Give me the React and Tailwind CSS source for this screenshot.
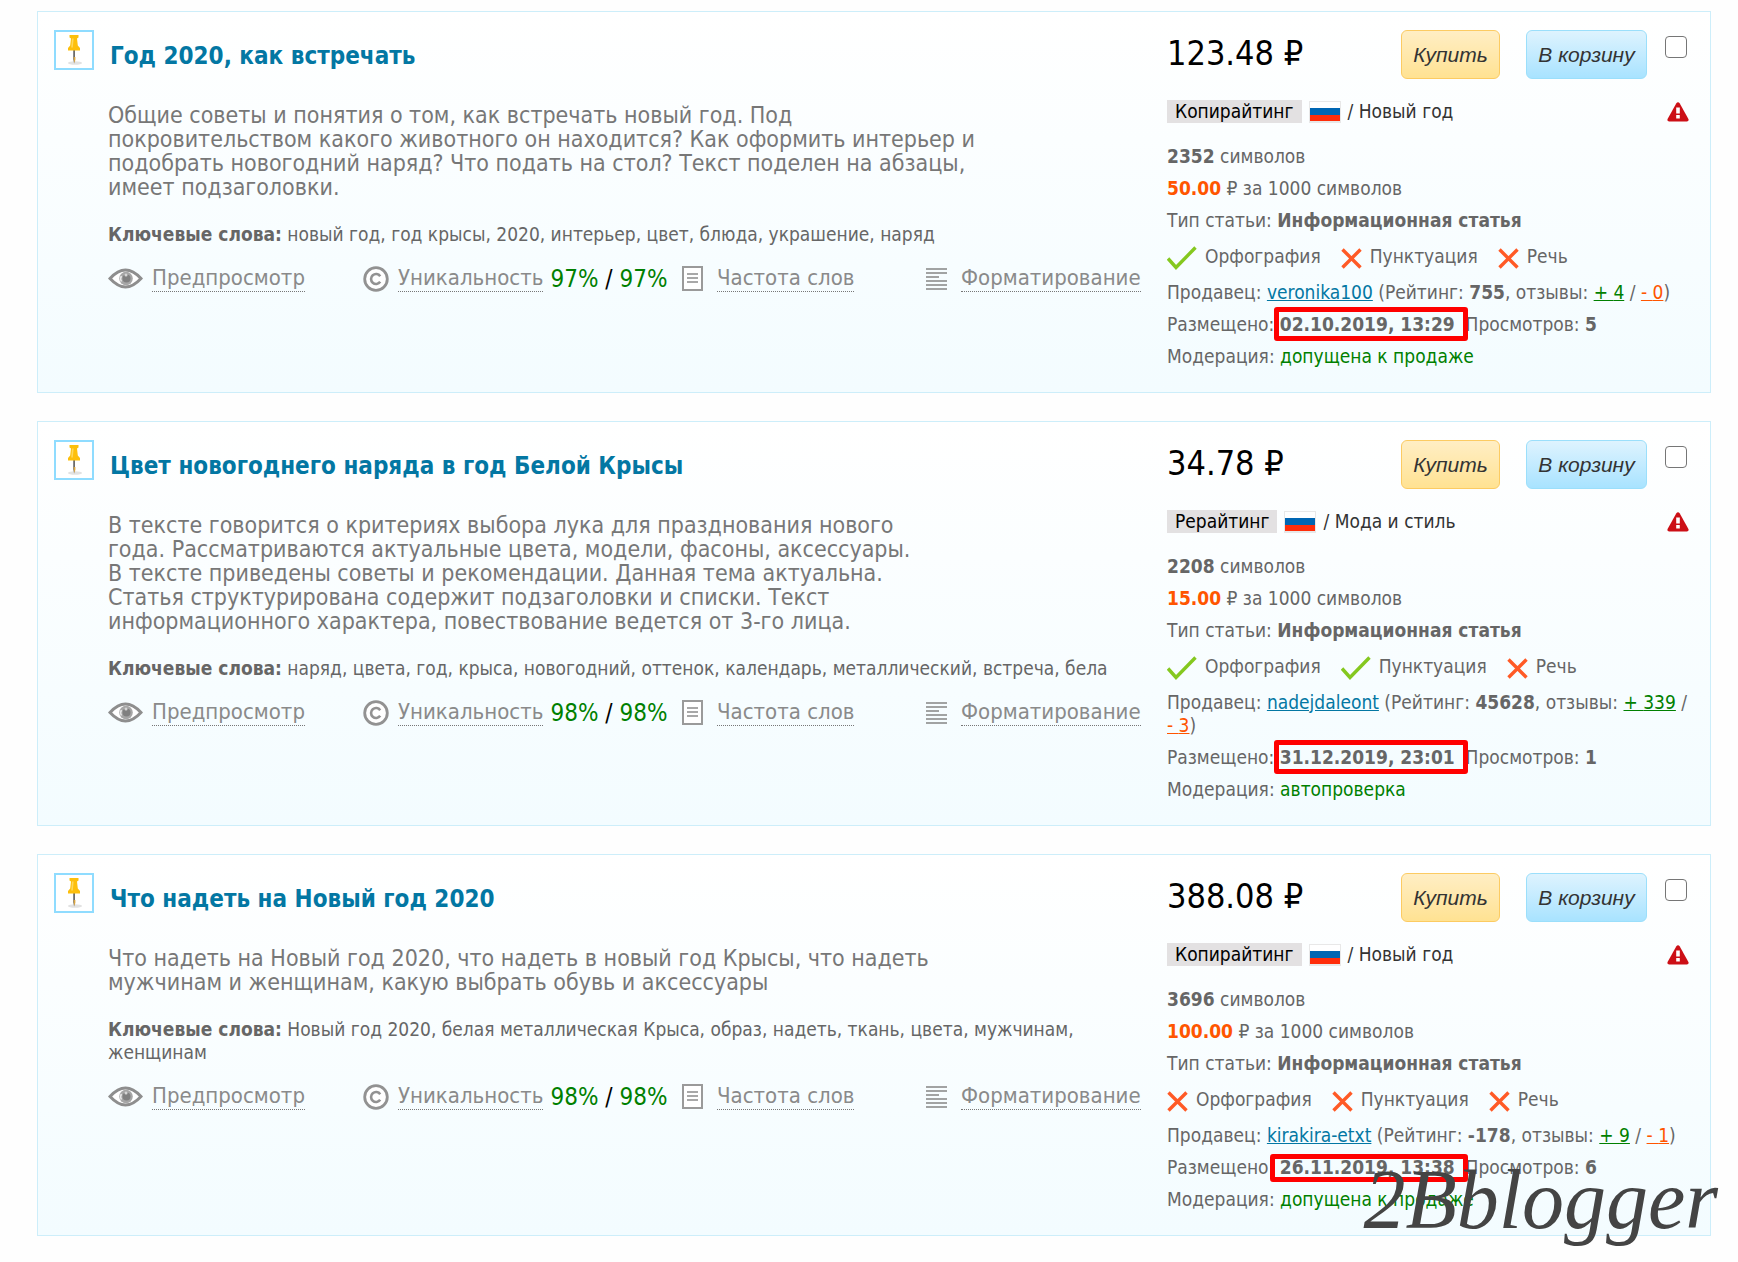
const articles = [
  {
    title: "Год 2020, как встречать",
    text: [
      "Общие советы и понятия о том, как встречать новый год. Под",
      "покровительством какого животного он находится? Как оформить интерьер и",
      "подобрать новогодний наряд? Что подать на стол? Текст поделен на абзацы,",
      "имеет подзаголовки.",
    ],
    keywords: "новый год, год крысы, 2020, интерьер, цвет, блюда, украшение, наряд",
    unique: ["97%", "97%"],
    price: "123.48",
    kind: "Копирайтинг",
    category: "Новый год",
    chars: 2352,
    rate: "50.00",
    checks: [true, false, false],
    seller: { name: "veronika100", rating: "755", plus: 4, minus: 0 },
    date: "02.10.2019, 13:29",
    frame: "-top-[6px] -bottom-[6px] -left-[6px]",
    views: 5,
    moderation: "допущена к продаже",
  },
  {
    title: "Цвет новогоднего наряда в год Белой Крысы",
    text: [
      "В тексте говорится о критериях выбора лука для празднования нового",
      "года. Рассматриваются актуальные цвета, модели, фасоны, аксессуары.",
      "В тексте приведены советы и рекомендации. Данная тема актуальна.",
      "Статья структурирована содержит подзаголовки и списки. Текст",
      "информационного характера, повествование ведется от 3-го лица.",
    ],
    keywords: "наряд, цвета, год, крыса, новогодний, оттенок, календарь, металлический, встреча, бела",
    unique: ["98%", "98%"],
    price: "34.78",
    kind: "Рерайтинг",
    category: "Мода и стиль",
    chars: 2208,
    rate: "15.00",
    checks: [true, true, false],
    seller: { name: "nadejdaleont", rating: "45628", plus: 339, minus: 3 },
    date: "31.12.2019, 23:01",
    frame: "-top-[6px] -bottom-[6px] -left-[6px]",
    views: 1,
    moderation: "автопроверка",
  },
  {
    title: "Что надеть на Новый год 2020",
    text: [
      "Что надеть на Новый год 2020, что надеть в новый год Крысы, что надеть",
      "мужчинам и женщинам, какую выбрать обувь и аксессуары",
    ],
    keywords: "Новый год 2020, белая металлическая Крыса, образ, надеть, ткань, цвета, мужчинам, женщинам",
    unique: ["98%", "98%"],
    price: "388.08",
    kind: "Копирайтинг",
    category: "Новый год",
    chars: 3696,
    rate: "100.00",
    checks: [false, false, false],
    seller: { name: "kirakira-etxt", rating: "-178", plus: 9, minus: 1 },
    date: "26.11.2019, 13:38",
    frame: "-top-[2px] -bottom-[4px] -left-[10px]",
    views: 6,
    moderation: "допущена к продаже",
  },
];

const checkNames = ["Орфография", "Пунктуация", "Речь"];

const PinIcon = () => (
  <svg width="36" height="36" viewBox="0 0 36 36" className="shrink-0" aria-hidden="true">
    <ellipse cx="19" cy="31" rx="7" ry="1.800" fill="#e2e2e2"/>
    <path d="M17.200 18h1.800v9l-.900 4.500-.900-4.500z" fill="#6b6b6b"/>
    <path d="M17.600 25h1.800v3l-1.300 3z" fill="#d9a441"/>
    <path d="M13.500 3h9v2.500l-1.500 1 .800 7 2.200 2.500v2.500H12v-2.500l2.200-2.500.800-7-1.500-1z" fill="#fdbf0c"/>
    <path d="M16 6.500h1.600l-.800 9h-1.600z" fill="#ffd95a"/>
  </svg>
);

const EyeIcon = () => (
  <svg width="35" height="21" viewBox="0 0 35 21" className="shrink-0" aria-hidden="true">
    <path d="M2 10.500C8 4 12 2 17.500 2S27 4 33 10.500C27 17 23 19 17.500 19S8 17 2 10.500z" fill="#fff" stroke="#8e8e8e" strokeWidth="3"/>
    <circle cx="18" cy="10.500" r="6.800" fill="#a6a6a6"/>
    <circle cx="18.500" cy="10.500" r="4" fill="#808080"/>
    <path d="M13.500 8a5 5 0 0 0 0 5.500" fill="none" stroke="#e6e6e6" strokeWidth="1.500"/>
    <circle cx="18" cy="7" r="1.500" fill="#d5d5d5"/>
  </svg>
);

const CopyrightIcon = () => (
  <svg width="26" height="26" viewBox="0 0 26 26" className="shrink-0" fill="none" stroke="#929292" aria-hidden="true">
    <circle cx="13" cy="13" r="11.300" fill="#fff" strokeWidth="2.800"/>
    <path d="M17.200 10.200A5 5 0 1 0 17.200 15.800" strokeWidth="2.600"/>
  </svg>
);

const DocIcon = () => (
  <svg width="21" height="25" viewBox="0 0 21 25" className="shrink-0" aria-hidden="true">
    <rect x="1" y="1" width="19" height="23" fill="#fff" stroke="#9a9a9a" strokeWidth="2"/>
    <path d="M5 8h11M5 12h11M5 16h11" stroke="#8c8c8c" strokeWidth="1.600"/>
  </svg>
);

const FormatIcon = () => (
  <svg width="21" height="22" viewBox="0 0 21 22" className="shrink-0" stroke="#858585" strokeWidth="1.700" aria-hidden="true">
    <path d="M0 1h21M0 5h21M0 9h13M0 13h21M0 17h21M0 21h21"/>
  </svg>
);

const FlagIcon = () => (
  <svg width="32" height="22" viewBox="0 0 32 22" aria-hidden="true">
    <path fill="#e8e8e8" d="M0 0h32v22H0z"/>
    <path fill="#fff" d="M1 1h30v6H1z"/>
    <path fill="#0066b3" d="M1 7h30v7H1z"/>
    <path fill="#ff2d0a" d="M1 14h30v6H1z"/>
  </svg>
);

const WarnIcon = () => (
  <svg width="22" height="20" viewBox="0 0 22 20" aria-hidden="true">
    <path d="M9.200 1.500q1.800-2.400 3.600 0l8.600 15.500q.800 2.500-1.600 2.500H2.200q-2.400 0-1.600-2.500z" fill="#cc0f16"/>
    <path d="M9.200 5.500h3.600v6H9.200zM9.200 13h3.600v3.500H9.200z" fill="#fff"/>
  </svg>
);

const TickIcon = () => (
  <svg width="30" height="24" viewBox="0 0 30 24" className="mt-1" aria-hidden="true">
    <path d="M1 12.500l8 9L28.500 1.500" fill="none" stroke="#85c81f" strokeWidth="3.400"/>
  </svg>
);

const CrossIcon = () => (
  <svg width="21" height="21" viewBox="0 0 21 21" className="mt-1" aria-hidden="true">
    <path d="M1.500 1.500l18 18M19.500 1.500l-18 18" fill="none" stroke="#ff5a26" strokeWidth="3.400"/>
  </svg>
);

function ToolLink({ icon, gap = "gap-[9px]", children }) {
  return (
    <a href="#" className={`flex items-center ${gap} whitespace-nowrap text-[22px] leading-[26px] text-[#8a8a8a]`}>
      {icon}
      <span className="border-b border-dotted border-[#777]">{children}</span>
    </a>
  );
}

function Article({ a, id }) {
  return (
    <article className="flex border border-[#cdeefa] bg-linear-to-b from-white to-[#f3fcff] pt-[18px] pr-[21px] pb-6 pl-4">
      <div className="flex min-w-0 flex-1 gap-[14px]">
        <button aria-label="Закрепить" className="flex h-10 w-10 shrink-0 items-center justify-center border-2 border-[#8fdcff] bg-white">
          <PinIcon/>
        </button>
        <div className="min-w-0 flex-1">
          <h2 className="mt-2 ml-[2px] text-[24px] leading-[36px] font-bold text-[#0377a3]">
            <a href="#">{a.title}</a>
          </h2>
          <p className="mt-[29px] text-[23px] leading-[24px] whitespace-nowrap text-[#777]">
            {a.text.map((line) => <span key={line} className="block">{line}</span>)}
          </p>
          <p className="mt-6 mr-10 leading-[23px]">
            <b>Ключевые слова:</b> {a.keywords}
          </p>
          <div className="mt-[19px] grid grid-cols-[255px_319px_244px_auto] items-center">
            <ToolLink icon={<EyeIcon/>}>Предпросмотр</ToolLink>
            <div className="flex items-center gap-[7px]">
              <ToolLink icon={<CopyrightIcon/>}>Уникальность</ToolLink>
              <span className="text-[24px] leading-[26px] whitespace-nowrap text-black">
                <span className="text-[#008000]">{a.unique[0]}</span> / <span className="text-[#008000]">{a.unique[1]}</span>
              </span>
            </div>
            <ToolLink icon={<DocIcon/>} gap="gap-[14px]">Частота слов</ToolLink>
            <ToolLink icon={<FormatIcon/>} gap="gap-[14px]">Форматирование</ToolLink>
          </div>
        </div>
      </div>

      <div className="w-[522px] shrink-0">
        <div className="flex items-start">
          <div className="flex-1 text-[34px] leading-[46px] text-black">{a.price} ₽</div>
          <button className="h-[49px] w-[99px] rounded-md border border-[#fccb62] bg-linear-to-b from-[#ffeec4] to-[#ffe292] font-['Liberation_Sans',sans-serif] text-[21px] text-[#333] italic">
            Купить
          </button>
          <button className="ml-[26px] h-[49px] w-[121px] rounded-md border border-[#9bdffb] bg-linear-to-b from-[#def3fe] to-[#a8e3ff] font-['Liberation_Sans',sans-serif] text-[21px] text-[#333] italic">
            В корзину
          </button>
          <input id={id} type="checkbox" aria-label={a.title} className="mt-[6px] mr-[2px] ml-[18px] h-[22px] w-[22px] appearance-none rounded-[4px] border border-[#767676] bg-white checked:bg-[#0075ff]"/>
        </div>

        <div className="mt-[21px] flex items-center leading-[23px] text-[#333]">
          <span className="bg-[#e3e1e2] px-2 text-black">{a.kind}</span>
          <span className="mx-[7px]"><FlagIcon/></span>
          <span className="flex-1">/ {a.category}</span>
          <a href="#" aria-label="Пожаловаться"><WarnIcon/></a>
        </div>

        <div className="mt-[22px] flex flex-col gap-[9px] leading-[23px]">
          <p><b>{a.chars}</b> символов</p>
          <p><b className="text-[#ff5500]">{a.rate}</b> ₽ за 1000 символов</p>
          <p>Тип статьи: <b>Информационная статья</b></p>
          <ul className="mt-[3px] mb-1 flex h-6 gap-[20px]">
            {checkNames.map((name, i) => (
              <li key={name} className="flex items-center gap-2">
                {a.checks[i] ? <TickIcon/> : <CrossIcon/>}
                {name}
              </li>
            ))}
          </ul>
          <p>
            Продавец: <a href="#" className="text-[#0377a3] underline">{a.seller.name}</a> (Рейтинг: <b>{a.seller.rating}</b>, отзывы:{" "}
            <a href="#" className="whitespace-nowrap text-[#008000] underline">+ {a.seller.plus}</a> /{" "}
            <span className="whitespace-nowrap"><a href="#" className="text-[#ff5500] underline">- {a.seller.minus}</a>)</span>
          </p>
          <p>
            Размещено:{" "}
            <span className="relative">
              <b>{a.date}</b>
              <span className={`absolute -right-[13px] rounded-[3px] border-[5px] border-[#ff0000] ${a.frame}`}/>
            </span>{" "}
            &nbsp;Просмотров: <b>{a.views}</b>
          </p>
          <p>Модерация: <span className="text-[#008000]">{a.moderation}</span></p>
        </div>
      </div>
    </article>
  );
}

export default function App() {
  return (
    <main className="relative flex flex-col gap-[28px] bg-[#fefefe] px-[27px] pt-[11px] pb-[26px] pl-[37px] font-['DejaVu_Sans_Condensed','DejaVu_Sans',sans-serif] text-[19px] text-[#666]">
      {articles.map((a, i) => <Article key={a.title} a={a} id={`article-${i}`}/>)}
      <div className="absolute right-[20px] bottom-3 font-['Liberation_Serif',serif] text-[84px] leading-[100px] text-[#444] italic">
        2Bblogger
      </div>
    </main>
  );
}
